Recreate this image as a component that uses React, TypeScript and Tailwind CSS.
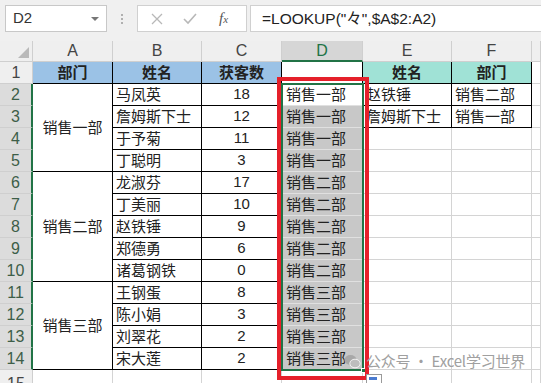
import React from 'react'

const FONT = { fontFamily: '"Noto Sans CJK SC", "Noto Sans", sans-serif' }
const LATIN = { fontFamily: '"Liberation Sans", sans-serif' }

type Row = { n: number; dept?: string; span?: number; name: string; count: string; d: string; e?: string; f?: string }

const rows: Row[] = [
  { n: 2, dept: '销售一部', span: 4, name: '马凤英', count: '18', d: '销售一部', e: '赵铁锤', f: '销售二部' },
  { n: 3, name: '詹姆斯下士', count: '12', d: '销售一部', e: '詹姆斯下士', f: '销售一部' },
  { n: 4, name: '于予菊', count: '11', d: '销售一部' },
  { n: 5, name: '丁聪明', count: '3', d: '销售一部' },
  { n: 6, dept: '销售二部', span: 5, name: '龙淑芬', count: '17', d: '销售二部' },
  { n: 7, name: '丁美丽', count: '10', d: '销售二部' },
  { n: 8, name: '赵铁锤', count: '9', d: '销售二部' },
  { n: 9, name: '郑德勇', count: '6', d: '销售二部' },
  { n: 10, name: '诸葛钢铁', count: '0', d: '销售二部' },
  { n: 11, dept: '销售三部', span: 4, name: '王钢蛋', count: '8', d: '销售三部' },
  { n: 12, name: '陈小娟', count: '3', d: '销售三部' },
  { n: 13, name: '刘翠花', count: '2', d: '销售三部' },
  { n: 14, name: '宋大莲', count: '2', d: '销售三部' },
]

const grid = 'border-r border-b border-[#d4d4d4]'
const black = 'border-r border-b border-black'

export default function App() {
  return (
    <div className="w-[541px] h-[383px] overflow-hidden bg-white text-[#222]" style={FONT}>
      {/* formula bar */}
      <div className="h-[41px] bg-[#f0f0f0] flex items-start pt-[5px] pl-[5px]">
        <div className="w-[102px] h-[27px] bg-white border border-[#c8c8c8] flex items-center justify-between pl-[7px] pr-[7px]">
          <span className="text-[15px] text-[#333]" style={LATIN}>D2</span>
          <span className="w-0 h-0 border-l-[4px] border-r-[4px] border-t-[4px] border-l-transparent border-r-transparent border-t-[#777]" />
        </div>
        <div className="w-[30px] h-[27px] flex flex-col items-center justify-center gap-[2px]">
          <span className="w-[2px] h-[2px] bg-[#b0b0b0]" />
          <span className="w-[2px] h-[2px] bg-[#b0b0b0]" />
          <span className="w-[2px] h-[2px] bg-[#b0b0b0]" />
        </div>
        <div className="w-[110px] h-[27px] bg-white border border-[#d0d0d0] flex items-center">
          <svg width="12" height="12" viewBox="0 0 12 12" className="ml-[13px]">
            <path d="M1 1 L11 11 M11 1 L1 11" stroke="#b8b8b8" strokeWidth="1.3" />
          </svg>
          <svg width="14" height="12" viewBox="0 0 14 12" className="ml-[20px]">
            <path d="M1 6 L5 10 L13 1" stroke="#b8b8b8" strokeWidth="1.6" fill="none" />
          </svg>
          <span className="ml-[22px] text-[15px] italic text-[#555]" style={{ fontFamily: '"Liberation Serif", serif' }}>
            f<span className="text-[11px]">x</span>
          </span>
        </div>
        <div className="ml-[3px] flex-1 h-[27px] bg-white border-l border-t border-b border-[#d0d0d0] flex items-center pl-[11px]">
          <span className="text-[15.5px] text-[#222]" style={{ fontFamily: '"Liberation Sans", "Noto Sans CJK SC", sans-serif' }}>
            =LOOKUP("々",$A$2:A2)
          </span>
        </div>
      </div>

      {/* sheet */}
      <div className="relative">
        <div className="grid grid-cols-[33px_80px_89px_80px_81px_89px_80px_1fr] grid-rows-[21px_repeat(14,22px)_22px]">
          {/* corner */}
          <div className="bg-[#efefef] border-r border-b border-[#cfcfcf] flex items-end justify-end pr-[3px] pb-[3px]">
            <svg width="11" height="11" viewBox="0 0 11 11">
              <path d="M11 0 L11 11 L0 11 Z" fill="#b9b9b9" />
            </svg>
          </div>
          {['A', 'B', 'C'].map(c => (
            <div key={c} className="bg-[#efefef] border-r border-b border-[#cfcfcf] flex items-center justify-center text-[16px] text-[#444]" style={LATIN}>{c}</div>
          ))}
          <div className="bg-[#d6d6d6] border-r border-[#cfcfcf] border-b-2 border-b-[#217346] flex items-center justify-center text-[16px] text-[#217346]" style={LATIN}>D</div>
          {['E', 'F', ''].map(c => (
            <div key={c} className="bg-[#efefef] border-r border-b border-[#cfcfcf] flex items-center justify-center text-[16px] text-[#444]" style={LATIN}>{c}</div>
          ))}

          {/* row 1 */}
          <div className="bg-[#efefef] border-r border-b border-[#cfcfcf] flex items-center justify-center text-[16px] text-[#444]" style={LATIN}>1</div>
          {['部门', '姓名', '获客数'].map(t => (
            <div key={t} className={`${black} bg-[#9bc2e6] flex items-center justify-center text-[15px] font-bold`}>{t}</div>
          ))}
          <div className={`${black} bg-white`} />
          {['姓名', '部门'].map(t => (
            <div key={t} className={`${black} bg-[#a0e2d6] flex items-center justify-center text-[15px] font-bold`}>{t}</div>
          ))}
          <div className={grid} />

          {rows.map(r => (
            <React.Fragment key={r.n}>
              <div className="bg-[#dcdcdc] border-b border-[#cfcfcf] border-r-2 border-r-[#217346] flex items-center justify-center text-[16px] text-[#3d5e48]" style={LATIN}>{r.n}</div>
              {r.dept && (
                <div className={`${black} bg-white flex items-center justify-center text-[15px] ${r.span === 4 ? 'row-span-4' : 'row-span-5'}`}>{r.dept}</div>
              )}
              <div className={`${black} bg-white flex items-center pl-[3px] text-[15px] whitespace-nowrap`}>{r.name}</div>
              <div className={`${black} bg-white flex items-center justify-center text-[15px]`} style={LATIN}>{r.count}</div>
              <div className={`${r.n <= 3 ? 'border-r border-b border-r-black border-b-[#e0e0e0]' : 'border-r border-b border-[#e0e0e0]'} ${r.n === 2 ? 'bg-white' : 'bg-[#c8c8c8]'} flex items-center pl-[4px] text-[15px] whitespace-nowrap`}>{r.d}</div>
              <div className={`${r.e ? black : grid} bg-white flex items-center pl-[3px] text-[15px] whitespace-nowrap overflow-hidden`}>{r.e}</div>
              <div className={`${r.f ? black : grid} bg-white flex items-center pl-[3px] text-[15px] whitespace-nowrap`}>{r.f}</div>
              <div className={grid} />
            </React.Fragment>
          ))}

          {/* row 15 */}
          <div className="bg-[#efefef] border-r border-b border-[#cfcfcf] flex items-start justify-center pt-[2px] text-[16px] text-[#444]" style={LATIN}>15</div>
          {[0, 1, 2, 3, 4, 5, 6].map(i => (
            <div key={i} className={grid} />
          ))}
        </div>

        {/* selection + highlight overlays */}
        <div className="absolute left-[281px] top-[42px] w-[83px] h-[288px] border-2 border-[#217346] pointer-events-none" />
        <div className="absolute left-[361px] top-[327px] w-[5px] h-[5px] bg-[#217346] border border-white" />
        <div className="absolute left-[277px] top-[36px] w-[92px] h-[303px] border-[4px] border-[#e5202a] pointer-events-none" />
        <div className="absolute left-[366px] top-[333px] w-[16px] h-[12px] border border-[#9a9a9a] bg-white">
          <div className="ml-[2px] mt-[2px] w-[8px] h-[3px] bg-[#4a7bd0]" />
        </div>

        {/* watermark */}
        <div className="absolute left-[344px] top-[309px] flex items-center gap-[5px] text-[15px] text-[#a0a0a0]">
          <svg width="17" height="15" viewBox="0 0 17 15">
            <ellipse cx="6.5" cy="6" rx="6" ry="5" fill="#a8a8a8" />
            <ellipse cx="11" cy="9.5" rx="5.2" ry="4.3" fill="#bdbdbd" stroke="#fff" strokeWidth="0.8" />
          </svg>
          <span className="tracking-[-0.2px]">公众号 · Excel学习世界</span>
        </div>
      </div>
    </div>
  )
}
